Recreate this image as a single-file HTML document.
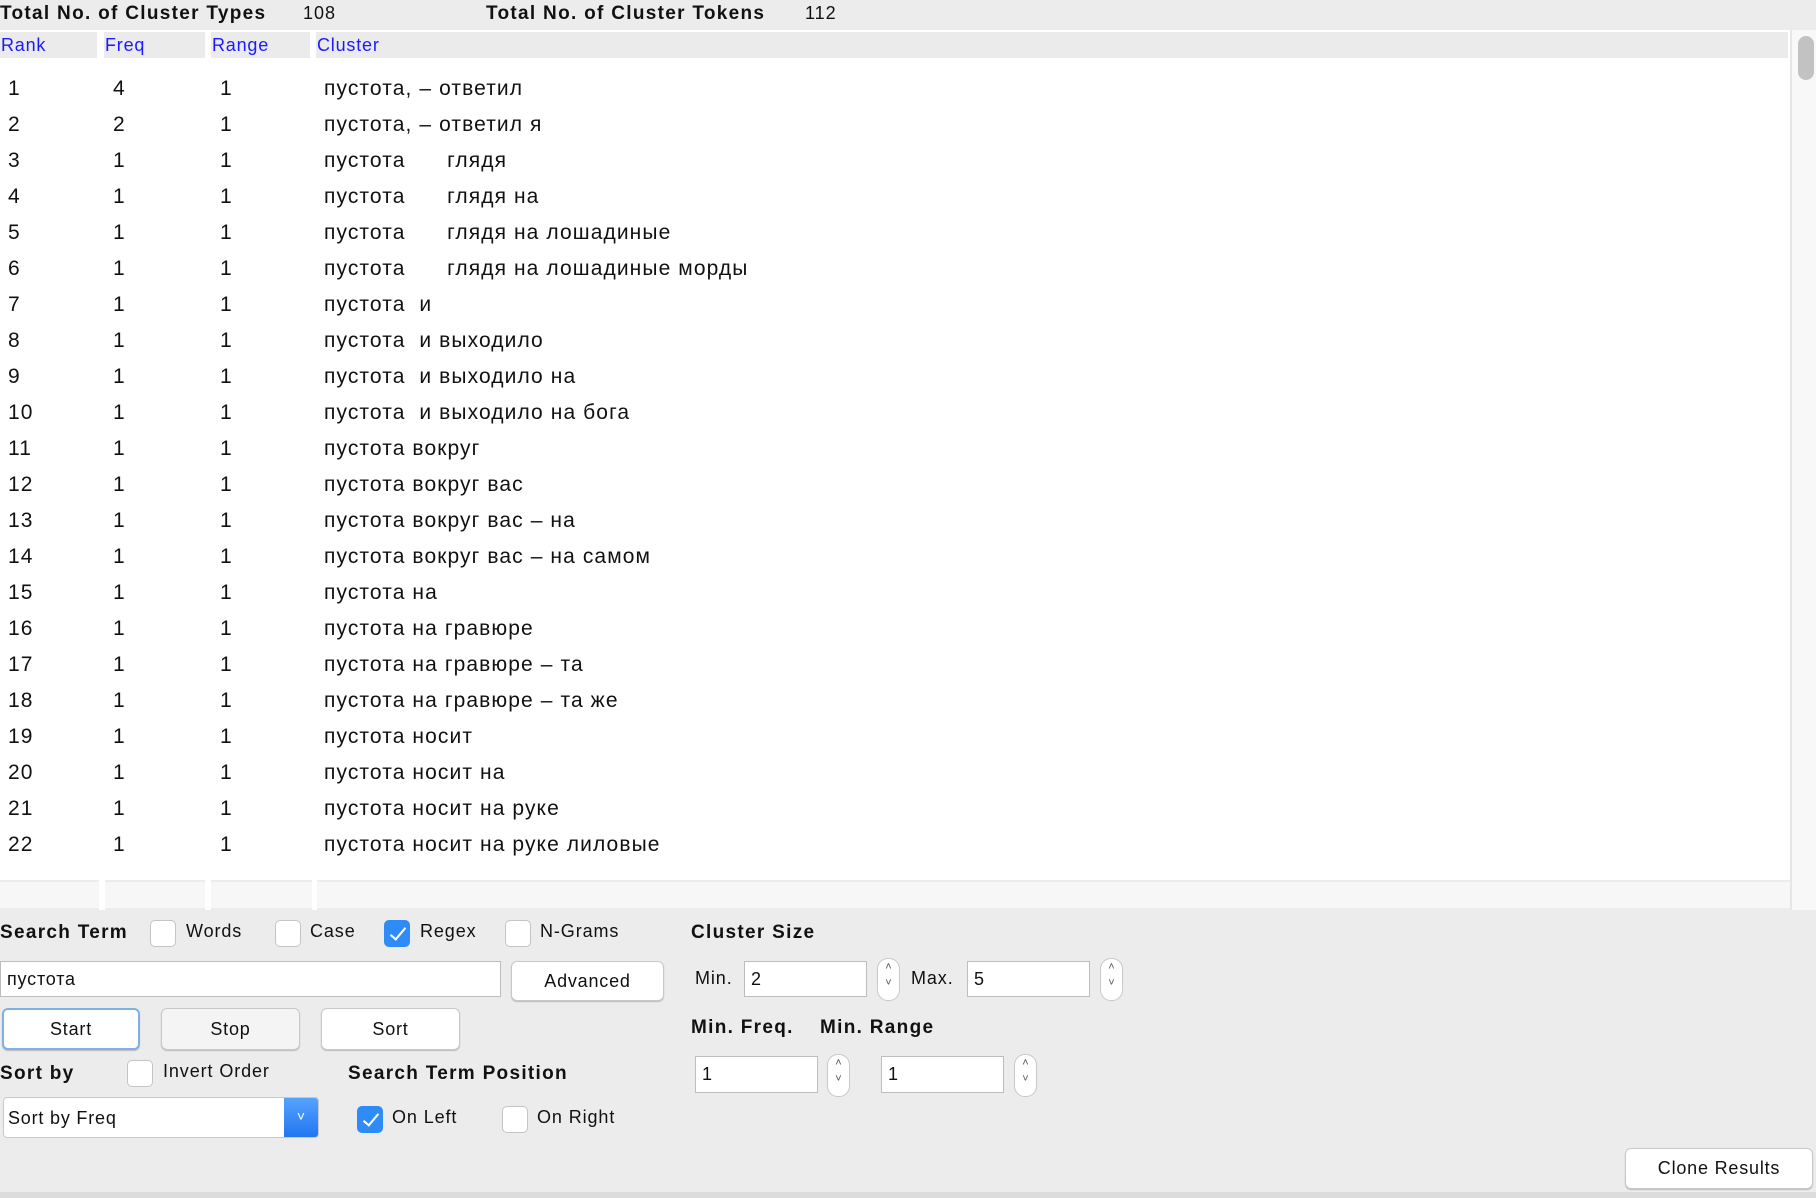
<!DOCTYPE html>
<html><head><meta charset="utf-8"><style>
*{margin:0;padding:0;box-sizing:border-box}
body{width:1816px;height:1198px;background:#ececec;position:relative;overflow:hidden;font-family:"Liberation Sans",sans-serif;color:#111}
.a{position:absolute;white-space:nowrap}
.b{font-weight:bold;font-size:19px;letter-spacing:1.3px}
.hd{position:absolute;top:32px;height:26px;background:#ebebeb;color:#1a1aff;font-size:18px;line-height:26px;padding-left:1px;letter-spacing:0.8px}
.r{position:absolute;font-size:21px;line-height:36px;height:36px;letter-spacing:1.1px;white-space:pre}
.cb{position:absolute;width:26px;height:27px;border:1px solid #c4c4c4;border-radius:5px;background:#fff}
.cb.on{background:#2f8cf7;border-color:#2f8cf7}
.cb.on:after{content:"";position:absolute;left:9px;top:3px;width:6px;height:14px;border:solid #fff;border-width:0 2px 2px 0;transform:rotate(40deg)}
.lb{position:absolute;font-size:18px;line-height:27px;letter-spacing:0.9px}
.tf{position:absolute;background:#fff;border:1px solid #bdbdbd;font-size:18px;padding-left:6px;letter-spacing:0.8px}
.bt{position:absolute;background:#fff;border:1px solid #c8c8c8;border-radius:6px;font-size:18px;text-align:center;box-shadow:0 1px 1px #bbb;letter-spacing:0.8px}
.sp{position:absolute;width:23px;height:43px;border:1px solid #c8c8c8;border-radius:11px;background:#fff;font-size:11px;text-align:center;line-height:16px;color:#555}
</style></head><body>
<div class="a b" style="left:0;top:3px">Total No. of Cluster Types</div>
<div class="a" style="left:303px;top:3px;font-size:18px;letter-spacing:1px">108</div>
<div class="a b" style="left:486px;top:3px">Total No. of Cluster Tokens</div>
<div class="a" style="left:805px;top:3px;font-size:18px;letter-spacing:1px">112</div>
<div style="position:absolute;left:0;top:30px;width:1790px;height:850px;background:#fff"></div>
<div style="position:absolute;left:1790px;top:30px;width:26px;height:880px;background:#f8f8f8;border-left:2px solid #e6e6e6"></div>
<div style="position:absolute;left:1798px;top:36px;width:16px;height:44px;background:#c2c2c2;border-radius:8px"></div>
<div class="hd" style="left:0;width:97px">Rank</div>
<div class="hd" style="left:104px;width:101px">Freq</div>
<div class="hd" style="left:211px;width:99px">Range</div>
<div class="hd" style="left:316px;width:1472px">Cluster</div>
<div style="position:absolute;left:0;top:62px;width:1790px;height:810px;overflow:hidden" id="t">
</div>
<div style="position:absolute;left:0;top:880px;width:1790px;height:30px;background:#f7f7f7;border-top:2px solid #ececec;border-bottom:2px solid #ececec"></div>
<div style="position:absolute;left:99px;top:880px;width:6px;height:30px;background:#fff"></div>
<div style="position:absolute;left:205px;top:880px;width:6px;height:30px;background:#fff"></div>
<div style="position:absolute;left:312px;top:880px;width:5px;height:30px;background:#fff"></div>

<div class="a b" style="left:0;top:922px">Search Term</div>
<div class="cb" style="left:150px;top:920px"></div><div class="lb" style="left:186px;top:918px">Words</div>
<div class="cb" style="left:275px;top:920px"></div><div class="lb" style="left:310px;top:918px">Case</div>
<div class="cb on" style="left:384px;top:920px"></div><div class="lb" style="left:420px;top:918px">Regex</div>
<div class="cb" style="left:505px;top:920px"></div><div class="lb" style="left:540px;top:918px">N-Grams</div>
<div class="a b" style="left:691px;top:922px">Cluster Size</div>

<div class="tf" style="left:0;top:961px;width:501px;height:36px;line-height:34px">пустота</div>
<div class="bt" style="left:511px;top:961px;width:153px;height:40px;line-height:38px">Advanced</div>
<div class="lb" style="left:695px;top:965px">Min.</div>
<div class="tf" style="left:744px;top:961px;width:123px;height:36px;line-height:34px">2</div>
<div class="sp" style="left:877px;top:958px">˄<br>˅</div>
<div class="lb" style="left:911px;top:965px">Max.</div>
<div class="tf" style="left:967px;top:961px;width:123px;height:36px;line-height:34px">5</div>
<div class="sp" style="left:1100px;top:958px">˄<br>˅</div>

<div class="bt" style="left:2px;top:1008px;width:138px;height:42px;line-height:38px;border:2px solid #7fb0e8">Start</div>
<div class="bt" style="left:161px;top:1008px;width:139px;height:42px;line-height:40px;background:#f4f4f4">Stop</div>
<div class="bt" style="left:321px;top:1008px;width:139px;height:42px;line-height:40px">Sort</div>
<div class="a b" style="left:691px;top:1017px">Min. Freq.</div>
<div class="a b" style="left:820px;top:1017px">Min. Range</div>
<div class="tf" style="left:695px;top:1056px;width:123px;height:37px;line-height:35px">1</div>
<div class="sp" style="left:827px;top:1054px">˄<br>˅</div>
<div class="tf" style="left:881px;top:1056px;width:123px;height:37px;line-height:35px">1</div>
<div class="sp" style="left:1014px;top:1054px">˄<br>˅</div>

<div class="a b" style="left:0;top:1063px">Sort by</div>
<div class="cb" style="left:127px;top:1060px"></div><div class="lb" style="left:163px;top:1058px">Invert Order</div>
<div class="a b" style="left:348px;top:1063px">Search Term Position</div>
<div style="position:absolute;left:3px;top:1097px;width:316px;height:41px;background:#fff;border:1px solid #c8c8c8;border-radius:4px;overflow:hidden">
<div class="a" style="left:4px;top:10px;font-size:18px;letter-spacing:0.8px">Sort by Freq</div>
<div style="position:absolute;right:0;top:0;width:34px;height:41px;background:linear-gradient(#56a3ff,#1f73f0);color:#fff;text-align:center;font-size:14px;line-height:36px">˅</div></div>
<div class="cb on" style="left:357px;top:1106px"></div><div class="lb" style="left:392px;top:1104px">On Left</div>
<div class="cb" style="left:502px;top:1106px"></div><div class="lb" style="left:537px;top:1104px">On Right</div>
<div class="bt" style="left:1625px;top:1148px;width:188px;height:41px;line-height:39px">Clone Results</div>
<div style="position:absolute;left:0;top:1192px;width:1816px;height:6px;background:#dcdcdc"></div>
<script>
var d=[["1","4","пустота, – ответил"],["2","2","пустота, – ответил я"],["3","1","пустота      глядя"],["4","1","пустота      глядя на"],["5","1","пустота      глядя на лошадиные"],["6","1","пустота      глядя на лошадиные морды"],["7","1","пустота  и"],["8","1","пустота  и выходило"],["9","1","пустота  и выходило на"],["10","1","пустота  и выходило на бога"],["11","1","пустота вокруг"],["12","1","пустота вокруг вас"],["13","1","пустота вокруг вас – на"],["14","1","пустота вокруг вас – на самом"],["15","1","пустота на"],["16","1","пустота на гравюре"],["17","1","пустота на гравюре – та"],["18","1","пустота на гравюре – та же"],["19","1","пустота носит"],["20","1","пустота носит на"],["21","1","пустота носит на руке"],["22","1","пустота носит на руке лиловые"],["23","1",""]];
var h="";d.forEach(function(r,i){var y=9+i*36;h+='<div class="r" style="left:8px;top:'+y+'px">'+r[0]+'</div><div class="r" style="left:113px;top:'+y+'px">'+r[1]+'</div><div class="r" style="left:220px;top:'+y+'px">1</div><div class="r" style="left:324px;top:'+y+'px">'+r[2]+'</div>';});
document.getElementById("t").innerHTML=h;
</script>
</body></html>
